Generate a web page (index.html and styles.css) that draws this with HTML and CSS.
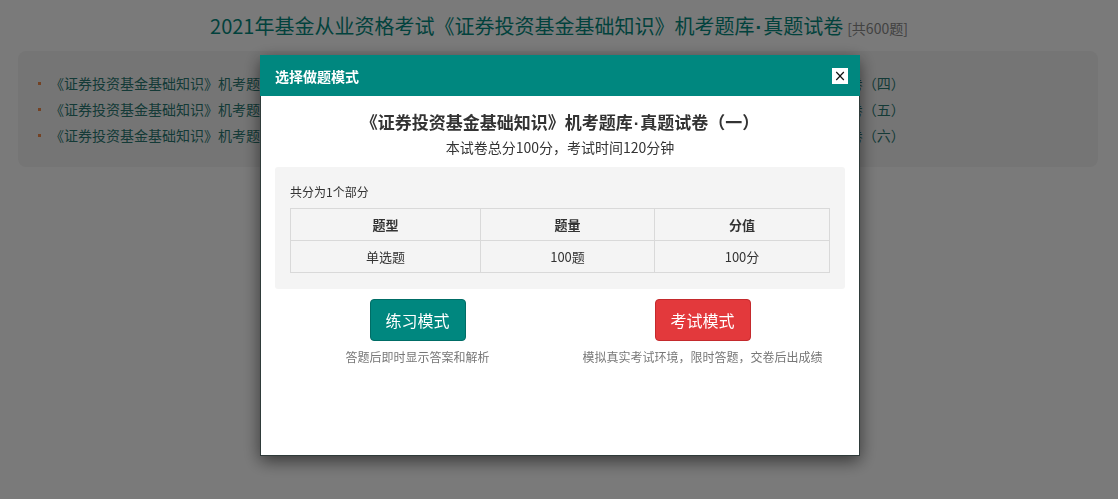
FILE: index.html
```html
<!DOCTYPE html>
<html lang="zh-CN">
<head>
<meta charset="utf-8">
<title>选择做题模式</title>
<link rel="stylesheet" href="styles.css">
</head>
<body>
<div class="page">
  <h1 class="page-title">2021年基金从业资格考试《证券投资基金基础知识》机考题库<span class="dot">·</span>真题试卷<span class="count">[共600题]</span></h1>
  <div class="card">
    <ul class="paper-list">
      <li>《证券投资基金基础知识》机考题库<span class="dot">·</span>真题试卷（一）</li>
      <li>《证券投资基金基础知识》机考题库<span class="dot">·</span>真题试卷（四）</li>
      <li>《证券投资基金基础知识》机考题库<span class="dot">·</span>真题试卷（二）</li>
      <li>《证券投资基金基础知识》机考题库<span class="dot">·</span>真题试卷（五）</li>
      <li>《证券投资基金基础知识》机考题库<span class="dot">·</span>真题试卷（三）</li>
      <li>《证券投资基金基础知识》机考题库<span class="dot">·</span>真题试卷（六）</li>
    </ul>
  </div>
</div>
<div class="overlay"></div>
<div class="modal">
  <div class="modal-head">
    <span class="modal-title">选择做题模式</span>
    <span class="close">×</span>
  </div>
  <div class="modal-body">
    <div class="paper-name">《证券投资基金基础知识》机考题库<span class="dot">·</span>真题试卷（一）</div>
    <div class="paper-info">本试卷总分100分，考试时间120分钟</div>
    <div class="panel">
      <div class="parts">共分为1个部分</div>
      <table class="spec">
        <thead>
          <tr><th class="c1">题型</th><th class="c2">题量</th><th class="c3">分值</th></tr>
        </thead>
        <tbody>
          <tr><td>单选题</td><td>100题</td><td>100分</td></tr>
        </tbody>
      </table>
    </div>
    <div class="modes">
      <div class="mode">
        <span class="btn btn-practice">练习模式</span>
        <p class="mode-desc">答题后即时显示答案和解析</p>
      </div>
      <div class="mode">
        <span class="btn btn-exam">考试模式</span>
        <p class="mode-desc">模拟真实考试环境，限时答题，交卷后出成绩</p>
      </div>
    </div>
  </div>
</div>
</body>
</html>
```

FILE: styles.css
```css
* { box-sizing: border-box; }
html, body { margin: 0; padding: 0; }
body {
  background: #ffffff;
  font-family: "Noto Sans CJK SC", "Noto Sans", sans-serif;
  color: #333;
  width: 1118px;
  height: 499px;
  overflow: hidden;
}
.dot {
  font-family: "Liberation Sans", sans-serif;
  font-weight: bold;
  line-height: 0;
  padding: 0 1px;
}
.page { padding-top: 12px; }
.page-title {
  margin: 0;
  text-align: center;
  font-size: 20px;
  line-height: 28px;
  font-weight: normal;
  color: #068a80;
}
.count {
  font-size: 14px;
  color: #8a8a8a;
  margin-left: 4px;
}
.card {
  margin: 9px 20px 0 18px;
  background: #f5f5f5;
  border-radius: 8px;
  padding: 19px 20px 19px 20px;
}
.paper-list {
  list-style: none;
  margin: 0;
  padding: 0;
  display: grid;
  grid-template-columns: 526px 1fr;
}
.paper-list li {
  font-size: 14px;
  line-height: 26px;
  color: #2b7a73;
  display: flex;
  align-items: center;
  white-space: nowrap;
}
.paper-list li::before {
  content: "";
  width: 3px;
  height: 3px;
  background: #f08a4b;
  margin-right: 9px;
}
.paper-list li:nth-child(2n)::before { background: transparent; }

.overlay {
  position: fixed;
  inset: 0;
  background: rgba(0, 0, 0, 0.52);
}
.modal {
  position: fixed;
  left: 260px;
  top: 55px;
  width: 600px;
  height: 401px;
  background: #fff;
  border: 1px solid #2f3b3a;
  border-top: 0;
  box-shadow: 0 5px 16px rgba(0, 0, 0, 0.55);
  display: flex;
  flex-direction: column;
}
.modal-head {
  height: 41px;
  background: #00877f;
  margin: 0 -1px;
  padding: 0 12px 0 15px;
  display: flex;
  align-items: center;
  justify-content: space-between;
}
.modal-title {
  color: #fff;
  font-size: 14px;
  font-weight: bold;
}
.close {
  width: 16px;
  height: 16px;
  background: #fff;
  color: #111;
  font-size: 15px;
  line-height: 16px;
  text-align: center;
  font-family: "DejaVu Sans", sans-serif;
}
.modal-body { padding: 0 14px 0 14px; }
.paper-name {
  margin-top: 13px;
  text-align: center;
  font-size: 17px;
  line-height: 26px;
  font-weight: bold;
  color: #333;
}
.paper-info {
  margin-top: 1px;
  text-align: center;
  font-size: 14px;
  line-height: 22px;
  color: #333;
}
.panel {
  margin-top: 9px;
  background: #f4f4f4;
  border-radius: 3px;
  padding: 15px 15px 16px 15px;
}
.parts {
  font-size: 12px;
  line-height: 20px;
  color: #333;
}
.spec {
  margin-top: 6px;
  width: 100%;
  border-collapse: collapse;
  table-layout: fixed;
  font-size: 13px;
}
.spec th, .spec td {
  border: 1px solid #d9d9d9;
  height: 32px;
  text-align: center;
  padding: 0;
  color: #333;
}
.spec th { font-weight: bold; }
.spec .c1 { width: 190px; }
.spec .c2 { width: 174px; }
.modes {
  margin-top: 10px;
  display: grid;
  grid-template-columns: 1fr 1fr;
}
.mode {
  display: flex;
  flex-direction: column;
  align-items: center;
}
.btn {
  width: 96px;
  height: 42px;
  border-radius: 4px;
  color: #fff;
  font-size: 16px;
  line-height: 40px;
  text-align: center;
}
.btn-practice { background: #00877f; border: 1px solid #006d66; }
.btn-exam { background: #e3393c; border: 1px solid #c42a2d; }
.mode-desc {
  margin: 7px 0 0 0;
  font-size: 12px;
  line-height: 18px;
  color: #777;
}
```
